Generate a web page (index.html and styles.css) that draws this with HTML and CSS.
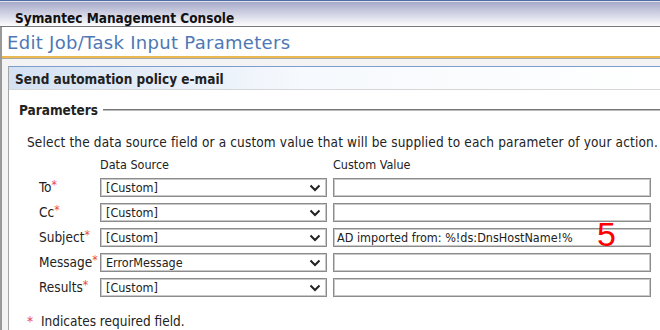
FILE: index.html
```html
<!DOCTYPE html>
<html lang="en">
<head>
  <meta charset="UTF-8">
  <title>Edit Job/Task Input Parameters</title>
  <link rel="stylesheet" href="styles.css">
</head>
<body>

  <!-- Console title bar -->
  <div class="topbar">Symantec Management Console</div>

  <div class="frame">
    <div class="page-title">Edit Job/Task Input Parameters</div>

    <div class="panel">
      <div class="panel-head">Send automation policy e-mail</div>

      <div class="panel-body">
        <div class="legend"><span>Parameters</span><i></i></div>

        <p class="intro">Select the data source field or a custom value that will be supplied to each parameter of your action.</p>

        <!-- Parameter grid -->
        <div class="params">
          <div></div>
          <div class="col-head">Data Source</div>
          <div class="col-head">Custom Value</div>

          <div class="lbl">To<sup>*</sup></div>
          <div class="select"><span>[Custom]</span><svg width="12" height="8" viewBox="0 0 12 8"><path d="M1.5 1.5 L6 6 L10.5 1.5" fill="none" stroke="#222" stroke-width="2"/></svg></div>
          <div class="input"></div>

          <div class="lbl">Cc<sup>*</sup></div>
          <div class="select"><span>[Custom]</span><svg width="12" height="8" viewBox="0 0 12 8"><path d="M1.5 1.5 L6 6 L10.5 1.5" fill="none" stroke="#222" stroke-width="2"/></svg></div>
          <div class="input"></div>

          <div class="lbl">Subject<sup>*</sup></div>
          <div class="select"><span>[Custom]</span><svg width="12" height="8" viewBox="0 0 12 8"><path d="M1.5 1.5 L6 6 L10.5 1.5" fill="none" stroke="#222" stroke-width="2"/></svg></div>
          <div class="input note-wrap">AD imported from: %!ds:DnsHostName!%<span class="step">5</span></div>

          <div class="lbl">Message<sup>*</sup></div>
          <div class="select"><span>ErrorMessage</span><svg width="12" height="8" viewBox="0 0 12 8"><path d="M1.5 1.5 L6 6 L10.5 1.5" fill="none" stroke="#222" stroke-width="2"/></svg></div>
          <div class="input"></div>

          <div class="lbl">Results<sup>*</sup></div>
          <div class="select"><span>[Custom]</span><svg width="12" height="8" viewBox="0 0 12 8"><path d="M1.5 1.5 L6 6 L10.5 1.5" fill="none" stroke="#222" stroke-width="2"/></svg></div>
          <div class="input"></div>
        </div>

        <p class="required"><b>*</b> Indicates required field.</p>
      </div>
    </div>
  </div>

</body>
</html>
```

FILE: styles.css
```css
html, body { margin: 0; padding: 0; }
body { width: 660px; height: 330px; overflow: hidden; background: #fff; font-family: "DejaVu Sans Condensed", "DejaVu Sans", sans-serif; font-size: 13.5px; color: #222; white-space: nowrap; }

.topbar { height: 25px; border-top: 1px solid #4f6fa6; border-bottom: 1px solid #777; box-shadow: inset 0 1px 0 #dfe2ee; background: linear-gradient(#a3a6c6, #d4d6e6 55%, #fdfdfe); font-weight: bold; font-size: 13.5px; line-height: 35px; padding-left: 15px; color: #111; }

.frame { border-left: 2px solid #999; background: #f3f3f3; height: 310px; }
.page-title { background: #fff; height: 29px; line-height: 31px; padding-left: 5px; font-family: "DejaVu Sans", sans-serif; font-size: 18px; letter-spacing: 0.3px; color: #4d78b5; border-bottom: 2px solid #e9b94f; box-shadow: 0 1px 0 #a9a9a9; }

.panel { margin: 8px 0 0 6px; border-left: 1px solid #a5a5a5; border-top: 1px solid #7d9dcd; background: #fff; }
.panel-head { height: 22px; line-height: 25px; padding-left: 6px; font-weight: bold; background: linear-gradient(90deg, #d4e1f3, #f6f9fd 45%, #fff); border-bottom: 1px solid #d6d6d6; }
.panel-body { padding: 12px 0 0 10px; height: 240px; }

.legend { display: flex; align-items: center; font-weight: bold; height: 16px; }
.legend i { flex: 1; border-top: 1px solid #777; border-bottom: 1px solid #bbb; margin-left: 5px; }

.intro { margin: 16px 0 0 8px; height: 16px; line-height: 16px; letter-spacing: 0.15px; }

.params { display: grid; grid-template-columns: 55px 227px 318px; grid-template-rows: 14px repeat(5, 19px); column-gap: 6px; row-gap: 6px; margin: 8px 0 0 20px; }
.col-head { line-height: 14px; font-size: 12.5px; }
.lbl { line-height: 19px; }
.lbl sup { color: #e8474a; font-size: 12px; line-height: 0; vertical-align: 0; position: relative; top: -3px; }

.select, .input { box-sizing: border-box; height: 19px; border: 1px solid #8b8b8b; box-shadow: inset 0 0 0 1px #c9c9c9; line-height: 17px; padding-left: 5px; background: #fff; font-size: 12.5px; }
.select { display: flex; justify-content: space-between; align-items: center; padding-right: 5px; }
.input { padding-left: 3px; }
.note-wrap { position: relative; }
.step { position: absolute; left: 263px; top: -12px; font-family: "Liberation Sans", Arial, sans-serif; font-size: 34px; line-height: 34px; color: #f00; }

.required { margin: 16px 0 0 8px; line-height: 16px; }
.required b { color: #e8474a; font-weight: normal; margin-right: 4px; }
```
